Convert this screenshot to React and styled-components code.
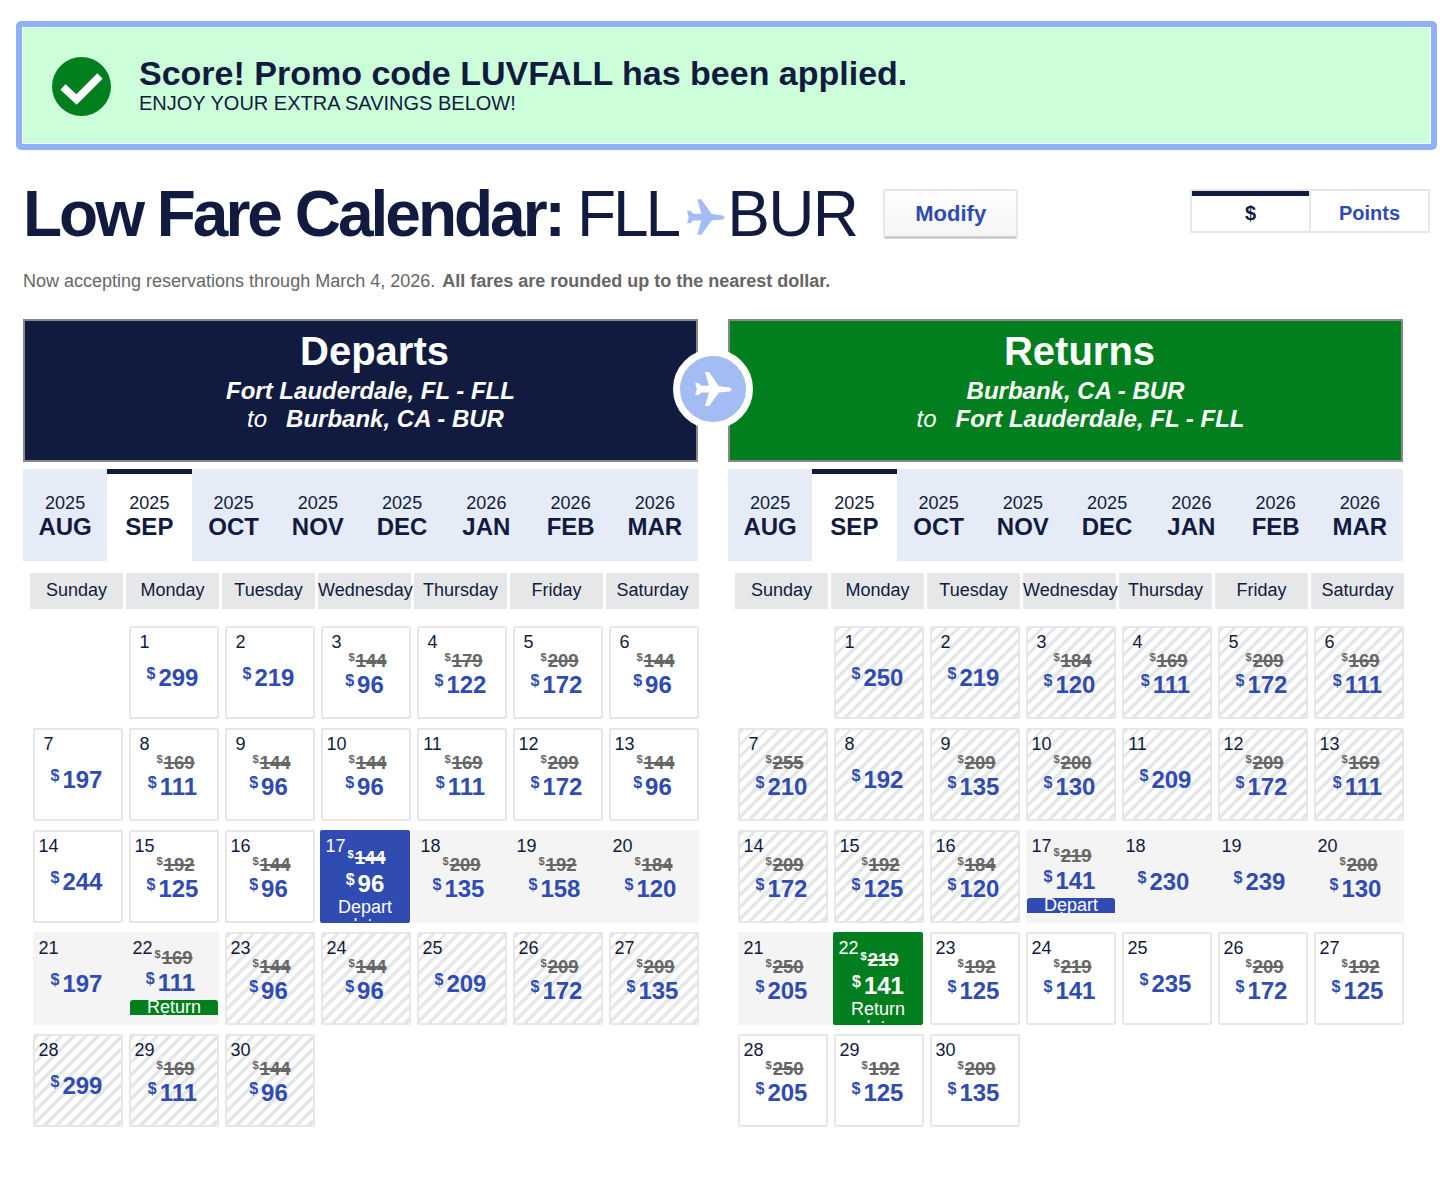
import styled, { createGlobalStyle } from 'styled-components'

const NAVY = '#111b40'
const BLUE = '#304cb2'
const GREEN = '#017f1e'
const LINE = '#e6e7e8'

const GlobalStyle = createGlobalStyle`
  html, body {
    margin: 0;
    background: #fff;
    font-family: "Liberation Sans", Arial, sans-serif;
    color: ${NAVY};
  }
`

const Page = styled.main`
  width: 1448px;
  min-height: 1184px;
  padding-top: 21px;
  box-sizing: border-box;
`

const Banner = styled.section`
  width: 1421px;
  height: 129px;
  margin-left: 16px;
  box-sizing: border-box;
  border: 6px solid #8fb1f9;
  border-radius: 5px;
  background: #ccffd9;
  box-shadow: inset 0 0 0 1px #fff;
  display: flex;
  align-items: center;
  gap: 28px;
  padding-left: 30px;

  svg {
    margin-top: 2px;
  }
`

const BannerText = styled.div`
  display: flex;
  flex-direction: column;
  margin-top: -2px;
`

const BannerTitle = styled.strong`
  font-size: 34px;
  line-height: 36px;
  margin-bottom: 1px;
`

const BannerSub = styled.span`
  font-size: 20px;
  line-height: 22px;
`

const TitleRow = styled.div`
  display: flex;
  align-items: flex-start;
  height: 50px;
  margin-top: 39px;
  padding: 0 18px 0 23px;
`

const PageTitle = styled.h1`
  margin: 0;
  font-size: 64px;
  line-height: 50px;
  font-weight: 400;
  letter-spacing: -3px;
  white-space: nowrap;
  display: flex;
  align-items: center;

  b {
    margin-right: 14px;
  }

  span {
    letter-spacing: -1.7px;
  }
`

const TitlePlane = styled.svg`
  width: 38px;
  height: 36px;
  margin: 6px 2px 0 9px;
  fill: #a3bcf3;
`

const ModifyButton = styled.button`
  width: 135px;
  height: 50px;
  margin-left: 26px;
  border: 2px solid ${LINE};
  border-bottom: 3px solid #cfcfcf;
  border-radius: 3px;
  background: linear-gradient(#fff, #f5f5f5);
  color: ${BLUE};
  font: bold 22px "Liberation Sans", Arial, sans-serif;
`

const UnitToggle = styled.div`
  margin-left: auto;
  display: flex;
  width: 240px;
  height: 44px;
  box-sizing: border-box;
  border: 2px solid ${LINE};
`

const UnitOption = styled.div`
  flex: 1;
  display: flex;
  align-items: center;
  justify-content: center;
  font-size: 20px;
  font-weight: bold;
  color: ${p => (p.$active ? NAVY : BLUE)};
  border-top: ${p => (p.$active ? `5px solid ${NAVY}` : '0')};
  padding-top: ${p => (p.$active ? 0 : 5)}px;

  & + & {
    border-left: 2px solid ${LINE};
  }
`

const Notice = styled.p`
  margin: 31px 0 0 23px;
  font-size: 18px;
  line-height: 22px;
  color: #666;

  b {
    margin-left: 7px;
  }
`

const Calendars = styled.div`
  position: relative;
  display: flex;
  gap: 30px;
  margin: 27px 0 0 23px;
`

const Hub = styled.div`
  position: absolute;
  left: 650px;
  top: 30px;
  width: 66px;
  height: 66px;
  border: 7px solid #fff;
  border-radius: 50%;
  background: #a3bcf3;
  display: flex;
  align-items: center;
  justify-content: center;
`

const HubPlane = styled.svg`
  width: 37px;
  height: 34px;
  fill: #fff;
`

const Panel = styled.section`
  width: 675px;
`

const PanelHeader = styled.header`
  height: 143px;
  box-sizing: border-box;
  border: 2px solid #888;
  background: ${p => p.$color};
  color: #fff;
  text-align: center;
  padding: 9px 0 0 28px;

  h2 {
    margin: 0 0 5px;
    font-size: 40px;
    line-height: 42px;
  }
`

const RouteLine = styled.div`
  font-size: 24px;
  line-height: 28px;
  font-weight: bold;
  font-style: italic;
  margin-left: 2px;

  &:first-of-type {
    margin-left: -8px;
  }

  i {
    font-weight: 400;
    margin-right: 19px;
  }
`

const MonthTabs = styled.div`
  display: grid;
  grid-template-columns: repeat(8, 84.25px);
  height: 92px;
  margin-top: 7px;
  background: #e6ebf8;
`

const MonthTab = styled.div`
  box-sizing: border-box;
  padding-top: ${p => (p.$active ? 19 : 24)}px;
  border-top: ${p => (p.$active ? `5px solid ${NAVY}` : '0')};
  background: ${p => (p.$active ? '#fff' : 'transparent')};
  text-align: center;

  span {
    display: block;
    font-size: 18px;
    line-height: 20px;
  }

  b {
    display: block;
    font-size: 24px;
    line-height: 28px;
  }
`

const WeekHeader = styled.div`
  display: grid;
  grid-template-columns: repeat(7, 93px);
  column-gap: 3px;
  margin: 12px 0 17px 7px;
`

const WeekDay = styled.div`
  height: 36px;
  background: ${LINE};
  font-size: 18px;
  line-height: 35px;
  text-align: center;
  white-space: nowrap;
`

const DayGrid = styled.div`
  display: grid;
  grid-template-columns: repeat(7, 90px);
  grid-auto-rows: 93px;
  gap: 9px 6px;
  margin-left: 10px;
`

const cellBackground = {
  plain: '#fff',
  hatched: `repeating-linear-gradient(135deg, ${LINE} 0 3.5px, #fff 3.5px 8.5px)`,
  range: '#f4f4f4',
}

const DayCell = styled.div`
  box-sizing: border-box;
  overflow: hidden;
  border: 2px solid ${p => (p.$selected ? p.$selected : p.$kind === 'range' ? 'transparent' : LINE)};
  border-radius: 2px;
  background: ${p => p.$selected || cellBackground[p.$kind]};
  color: ${p => (p.$selected ? '#fff' : NAVY)};
  padding: 4px 0 0;
  display: flex;
  flex-direction: column;
  margin: ${p => (p.$selected ? '0 1px 0 -1px' : '0')};
  box-shadow: ${p => (p.$joinLeft ? '-6px 0 0 #f4f4f4' : '0 0 0 transparent')}, ${p => (p.$joinRight ? '6px 0 0 #f4f4f4' : '0 0 0 transparent')};
`

const RangeCell = styled(DayCell)`
  overflow: visible;
`

const DayNumber = styled.div`
  width: 27px;
  height: 20px;
  margin-left: ${p => (p.$shift ? -2 : 0)}px;
  font-size: 18px;
  line-height: 20px;
  text-align: center;
`

const OldFare = styled.div`
  height: 18px;
  margin-top: ${p => (p.$pill ? -9 : p.$selected ? -7 : 0)}px;
  padding: 0 ${p => (p.$shift ? 4 : 0)}px 0 3px;
  text-align: center;
  font-size: 18.5px;
  line-height: 18px;
  font-weight: bold;
  color: ${p => (p.$selected ? '#fff' : '#666')};

  s {
    text-decoration-thickness: 2px;
  }

  sup {
    font-size: 11px;
    line-height: 0;
    margin-right: 1px;
    vertical-align: 6px;
  }
`

const Fare = styled.div`
  margin-top: ${p => (p.$solo ? 12 : p.$selected ? 3 : p.$pill ? 2 : 1)}px;
  padding-right: ${p => (p.$selected ? 0 : p.$shift ? 7 : 3)}px;
  text-align: center;
  font-size: 24px;
  line-height: 28px;
  font-weight: bold;
  color: ${p => (p.$selected ? '#fff' : BLUE)};
  white-space: nowrap;

  sup {
    font-size: 16px;
    line-height: 0;
    margin-right: 3px;
    vertical-align: 7px;
  }
`

const DateLabel = styled.div`
  margin-top: 0;
  padding-bottom: 4px;
  font-size: 18px;
  line-height: 18px;
  text-align: center;
  color: #fff;
`

const DatePill = styled.div`
  height: 15px;
  margin: 3px -1px 0;
  overflow: hidden;
  border-radius: 3px 3px 0 0;
  background: ${p => p.$color};
  color: #fff;
  font-size: 18px;
  line-height: 14px;
  text-align: center;
`

const Plane = ({ as: Icon }) => (
  <Icon viewBox="0 0 111 103" aria-hidden="true">
    <path d="M111 53 105 47 72 43 42 0H30L42 42H18L10 33H0L5 53 0 70H10L18 62H42L30 103H42L72 62 105 59Z" />
  </Icon>
)

const CheckBadge = () => (
  <svg width="59" height="59" viewBox="0 0 59 59" aria-hidden="true">
    <circle cx="29.5" cy="29.5" r="29.5" fill={GREEN} />
    <path d="M11 30 24.5 42.5 48 19" fill="none" stroke="#fff" strokeWidth="7.5" />
  </svg>
)

const MONTHS = [
  ['2025', 'AUG'], ['2025', 'SEP'], ['2025', 'OCT'], ['2025', 'NOV'],
  ['2025', 'DEC'], ['2026', 'JAN'], ['2026', 'FEB'], ['2026', 'MAR'],
]

const WEEK_DAYS = ['Sunday', 'Monday', 'Tuesday', 'Wednesday', 'Thursday', 'Friday', 'Saturday']

// [was, now] for each day of the month, was is null when the fare has no discount
const DEPART_FARES = [
  [null, 299], [null, 219], [144, 96], [179, 122], [209, 172], [144, 96],
  [null, 197], [169, 111], [144, 96], [144, 96], [169, 111], [209, 172], [144, 96],
  [null, 244], [192, 125], [144, 96], [144, 96], [209, 135], [192, 158], [184, 120],
  [null, 197], [169, 111], [144, 96], [144, 96], [null, 209], [209, 172], [209, 135],
  [null, 299], [169, 111], [144, 96],
]

const RETURN_FARES = [
  [null, 250], [null, 219], [184, 120], [169, 111], [209, 172], [169, 111],
  [255, 210], [null, 192], [209, 135], [200, 130], [null, 209], [209, 172], [169, 111],
  [209, 172], [192, 125], [184, 120], [219, 141], [null, 230], [null, 239], [200, 130],
  [250, 205], [219, 141], [192, 125], [219, 141], [null, 235], [209, 172], [192, 125],
  [250, 205], [192, 125], [209, 135],
]

const Day = ({ day, fare, calendar }) => {
  const [was, now] = fare
  const { selectedDay, selectedColor, selectedLabel, pillDay, pillColor, pillLabel, rangeFrom, rangeTo, kindOutside } = calendar
  const isSelected = day === selectedDay
  const inRange = day >= rangeFrom && day <= rangeTo
  const kind = inRange ? 'range' : kindOutside(day)
  const hasPill = day === pillDay
  const column = day % 7
  const isActive = d => d >= rangeFrom && d <= rangeTo || d === selectedDay
  const joinLeft = inRange && column !== 0 && isActive(day - 1)
  const joinRight = inRange && column !== 6 && isActive(day + 1)
  const Cell = hasPill ? RangeCell : DayCell

  return (
    <Cell
      $kind={kind}
      $selected={isSelected ? selectedColor : null}
      $joinLeft={joinLeft}
      $joinRight={joinRight}
    >
      <DayNumber $shift={joinLeft}>{day}</DayNumber>
      {was && (
        <OldFare $pill={hasPill} $selected={isSelected} $shift={joinLeft}>
          <sup>$</sup><s>{was}</s>
        </OldFare>
      )}
      <Fare $solo={!was} $pill={hasPill} $selected={isSelected} $shift={joinLeft}>
        <sup>$</sup>{now}
      </Fare>
      {isSelected && <DateLabel>{selectedLabel} date</DateLabel>}
      {hasPill && <DatePill $color={pillColor}>{pillLabel} date</DatePill>}
    </Cell>
  )
}

const Calendar = ({ title, color, from, to, fares, calendar }) => (
  <Panel>
    <PanelHeader $color={color}>
      <h2>{title}</h2>
      <RouteLine>{from}</RouteLine>
      <RouteLine><i>to</i>{to}</RouteLine>
    </PanelHeader>
    <MonthTabs>
      {MONTHS.map(([year, month]) => (
        <MonthTab key={month} $active={month === 'SEP'}>
          <span>{year}</span>
          <b>{month}</b>
        </MonthTab>
      ))}
    </MonthTabs>
    <WeekHeader>
      {WEEK_DAYS.map(name => <WeekDay key={name}>{name}</WeekDay>)}
    </WeekHeader>
    <DayGrid>
      <div />
      {fares.map((fare, index) => (
        <Day key={index} day={index + 1} fare={fare} calendar={calendar} />
      ))}
    </DayGrid>
  </Panel>
)

const departCalendar = {
  selectedDay: 17,
  selectedColor: BLUE,
  selectedLabel: 'Depart',
  pillDay: 22,
  pillColor: GREEN,
  pillLabel: 'Return',
  rangeFrom: 18,
  rangeTo: 22,
  kindOutside: day => (day > 22 ? 'hatched' : 'plain'),
}

const returnCalendar = {
  selectedDay: 22,
  selectedColor: GREEN,
  selectedLabel: 'Return',
  pillDay: 17,
  pillColor: BLUE,
  pillLabel: 'Depart',
  rangeFrom: 17,
  rangeTo: 21,
  kindOutside: day => (day < 17 ? 'hatched' : 'plain'),
}

const App = () => (
  <Page>
    <GlobalStyle />
    <Banner>
      <CheckBadge />
      <BannerText>
        <BannerTitle>Score! Promo code LUVFALL has been applied.</BannerTitle>
        <BannerSub>ENJOY YOUR EXTRA SAVINGS BELOW!</BannerSub>
      </BannerText>
    </Banner>

    <TitleRow>
      <PageTitle>
        <b>Low Fare Calendar:</b>FLL<Plane as={TitlePlane} /><span>BUR</span>
      </PageTitle>
      <ModifyButton type="button">Modify</ModifyButton>
      <UnitToggle>
        <UnitOption $active>$</UnitOption>
        <UnitOption>Points</UnitOption>
      </UnitToggle>
    </TitleRow>

    <Notice>
      Now accepting reservations through March 4, 2026.
      <b>All fares are rounded up to the nearest dollar.</b>
    </Notice>

    <Calendars>
      <Calendar
        title="Departs"
        color={NAVY}
        from="Fort Lauderdale, FL - FLL"
        to="Burbank, CA - BUR"
        fares={DEPART_FARES}
        calendar={departCalendar}
      />
      <Calendar
        title="Returns"
        color={GREEN}
        from="Burbank, CA - BUR"
        to="Fort Lauderdale, FL - FLL"
        fares={RETURN_FARES}
        calendar={returnCalendar}
      />
      <Hub><Plane as={HubPlane} /></Hub>
    </Calendars>
  </Page>
)

export default App
